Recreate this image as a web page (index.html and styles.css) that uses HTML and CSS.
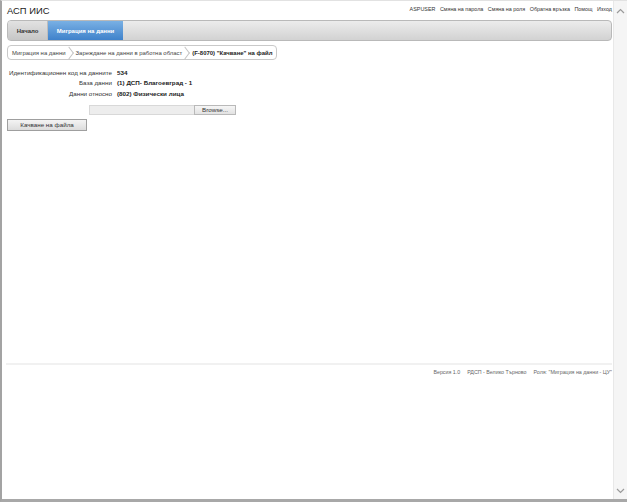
FILE: index.html
```html
<!DOCTYPE html>
<html lang="bg">
<head>
    <meta charset="UTF-8">
    <title>АСП ИИС</title>
    <link rel="stylesheet" href="styles.css">
</head>
<body>
<div class="window">
    <div class="page">
        <!-- Header -->
        <div class="header">
            <div class="title">АСП ИИС</div>
            <div class="user-links">
                <a href="#">ASPUSER</a>
                <a href="#">Смяна на парола</a>
                <a href="#">Смяна на роля</a>
                <a href="#">Обратна връзка</a>
                <a href="#">Помощ</a>
                <a href="#">Изход</a>
            </div>
        </div>

        <!-- Main menu -->
        <div class="menu">
            <a class="tab" href="#">Начало</a>
            <a class="tab active" href="#">Миграция на данни</a>
        </div>

        <!-- Breadcrumb -->
        <div class="crumbs">
            <span class="crumb">Миграция на данни</span>
            <span class="sep"></span>
            <span class="crumb">Зареждане на данни в работна област</span>
            <span class="sep"></span>
            <span class="crumb current">(F-8070) "Качване" на файл</span>
        </div>

        <!-- Upload form -->
        <div class="content">
            <div class="fields">
                <span class="label">Идентификационен код на данните</span>
                <span class="value">534</span>
                <span class="label">База данни</span>
                <span class="value">(1) ДСП- Благоевград - 1</span>
                <span class="label">Данни относно</span>
                <span class="value">(802) Физически лица</span>
            </div>
            <div class="file-row">
                <span class="file-name"></span>
                <span class="browse">Browse...</span>
            </div>
            <button type="button" class="upload">Качване на файла</button>
        </div>

        <!-- Footer -->
        <div class="footer">
            <span>Версия 1.0</span>
            <span>РДСП - Велико Търново</span>
            <span>Роля: "Миграция на данни - ЦУ"</span>
        </div>
    </div>

    <!-- Scrollbar -->
    <div class="scrollbar">
        <svg width="9" height="6" viewBox="0 0 9 6"><path d="M1 5 L4.5 1.5 L8 5" fill="none" stroke="#9a9a9a" stroke-width="1.2"/></svg>
        <svg width="9" height="6" viewBox="0 0 9 6"><path d="M1 1 L4.5 4.5 L8 1" fill="none" stroke="#9a9a9a" stroke-width="1.2"/></svg>
    </div>
</div>
</body>
</html>
```

FILE: styles.css
```css
body {
    margin: 0;
    padding: 0;
    background-color: #ffffff;
    font-family: "Liberation Sans", Arial, sans-serif;
    overflow: hidden;
}

.window {
    display: flex;
    width: 627px;
    height: 502px;
    box-sizing: border-box;
    border-left: 2px solid #a3a3a3;
    border-bottom: 3px solid #a8a8a8;
    border-top: 1px solid #e2e2e2;
}

.page {
    flex: 1;
    display: flex;
    flex-direction: column;
    padding: 0 1px 0 5px;
}

/* Header */
.header {
    height: 19px;
    display: flex;
    justify-content: space-between;
    align-items: flex-start;
}

.title {
    font-size: 9.4px;
    color: #222;
    padding-top: 4px;
}

.user-links {
    display: flex;
    gap: 4.5px;
    padding-top: 5px;
    font-size: 5.4px;
}

.user-links a {
    color: #333;
    text-decoration: none;
}

/* Main menu */
.menu {
    height: 19px;
    display: flex;
    border: 1px solid #b9b9b9;
    border-radius: 4px;
    background: linear-gradient(#ececec, #d2d2d2);
    overflow: hidden;
}

.tab {
    display: flex;
    align-items: center;
    justify-content: center;
    font-size: 6px;
    font-weight: bold;
    color: #333;
    text-decoration: none;
    background: linear-gradient(#e2e2e2, #c6c6c6);
    border-right: 1px solid #bdbdbd;
    width: 39px;
}

.tab.active {
    width: 75px;
    color: #ffffff;
    background: linear-gradient(#79b0e4, #3f82cb);
    border-right: none;
}

/* Breadcrumb */
.crumbs {
    align-self: flex-start;
    display: flex;
    align-items: center;
    height: 13px;
    margin-top: 4px;
    padding: 0 4px;
    border: 1px solid #c9c9c9;
    border-radius: 4px;
    font-size: 5.95px;
    color: #444;
}

.crumb.current {
    font-weight: bold;
    color: #222;
}

.sep {
    width: 7px;
    height: 7px;
    margin: 0 3px 0 -1px;
    border-top: 1px solid #c3c3c3;
    border-right: 1px solid #c3c3c3;
    transform: rotate(45deg) skew(8deg, 8deg);
}

/* Form */
.content {
    flex: 1;
    padding-top: 9px;
    font-size: 6.25px;
    color: #222;
}

.fields {
    display: grid;
    grid-template-columns: 105px auto;
    column-gap: 5px;
    row-gap: 3.3px;
    align-items: center;
}

.label {
    text-align: right;
    color: #333;
    white-space: nowrap;
}

.value {
    font-weight: bold;
}

.file-row {
    display: flex;
    margin: 8px 0 0 82px;
    height: 10px;
}

.file-name {
    width: 104px;
    background: #ededed;
    border: 1px solid #d8d8d8;
    border-right: none;
}

.browse {
    display: flex;
    align-items: center;
    justify-content: center;
    width: 40px;
    border: 1px solid #b9b9b9;
    background: linear-gradient(#f6f6f6, #e2e2e2);
    font-size: 6.25px;
    color: #333;
}

.upload {
    display: block;
    margin-top: 4px;
    width: 80px;
    height: 12px;
    padding: 0;
    border: 1px solid #9f9f9f;
    background: linear-gradient(#f4f4f4, #dcdcdc);
    font-family: "Liberation Sans", Arial, sans-serif;
    font-size: 6.25px;
    color: #333;
}

/* Footer */
.footer {
    display: flex;
    justify-content: flex-end;
    gap: 7px;
    border-top: 2px solid #f1f1f1;
    padding: 4px 0 124px;
    margin-left: -1px;
    font-size: 5.3px;
    color: #666;
}

/* Fake scrollbar */
.scrollbar {
    width: 13px;
    background: #f5f5f5;
    border-left: 1px solid #e8e8e8;
    display: flex;
    flex-direction: column;
    justify-content: space-between;
    align-items: center;
    padding: 7px 0 5px;
}
```
